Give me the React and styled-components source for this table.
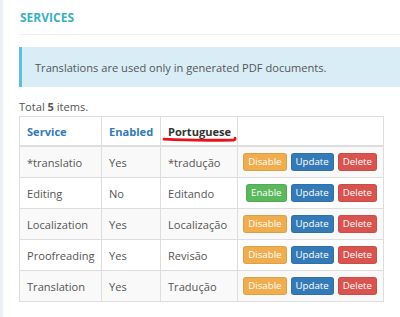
import React from "react";
import styled, { createGlobalStyle } from "styled-components";

const Global = createGlobalStyle`
  html, body { margin: 0; padding: 0; background: #fff; }
  body { font-family: "Open Sans", "Liberation Sans", sans-serif; color: #555; }
`;

const Page = styled.div`
  display: flex;
  width: 400px;
  height: 317px;
  overflow: hidden;
`;

const SideStrip = styled.div`
  width: 3px;
  flex: none;
  background: #edf0f5;
`;

const Content = styled.main`
  flex: 1;
  padding: 9px 0 0 16px;
  min-width: 0;
`;

const Title = styled.h2`
  margin: 0 0 0 1px;
  font-size: 12px;
  line-height: 18px;
  font-weight: 700;
  color: #3aafc1;
`;

const Rule = styled.hr`
  margin: 7px 0 12px 1px;
  border: 0;
  border-top: 1px solid #eeeeee;
`;

const Alert = styled.div`
  height: 40px;
  box-sizing: border-box;
  display: flex;
  align-items: center;
  padding-left: 13px;
  background: #d9edf7;
  border-left: 3px solid #5bc0de;
  font-size: 11.1px;
  color: #555;
`;

const Summary = styled.div`
  margin-top: 12px;
  font-size: 11.1px;
  line-height: 16px;
  color: #555;
  b { font-weight: 700; }
`;

const TableWrap = styled.div`
  position: relative;
  width: 364px;
  margin-top: 1px;
`;

const Table = styled.table`
  width: 364px;
  border-collapse: collapse;
  table-layout: fixed;
  font-size: 11.1px;
`;

const Th = styled.th`
  height: 28px;
  padding: 0 7px;
  text-align: left;
  font-weight: 700;
  color: ${(p) => (p.$link ? "#337ab7" : "#333")};
  border: 1px solid #dddddd;
  border-bottom-width: 2px;
  white-space: nowrap;
  background: #fff;
`;

const Row = styled.tr`
  background: ${(p) => (p.$odd ? "#f9f9f9" : "#fff")};
`;

const Td = styled.td`
  height: 30px;
  padding: 0 ${(p) => (p.$actions ? "6px" : "7px")};
  border: 1px solid #dddddd;
  color: #555;
  white-space: nowrap;
  overflow: ${(p) => (p.$actions ? "visible" : "hidden")};
`;

const Actions = styled.div`
  display: flex;
  justify-content: flex-end;
  gap: 4px;
`;

const colors = {
  warning: "#f0ad4e",
  primary: "#337ab7",
  danger: "#d9534f",
  success: "#5cb85c",
};

const Btn = styled.button`
  flex: none;
  height: 18px;
  padding: 0 4px;
  border: 1px solid rgba(0, 0, 0, 0.08);
  border-radius: 3px;
  background: ${(p) => colors[p.$kind]};
  color: #fff;
  font-family: "Open Sans", "Liberation Sans", sans-serif;
  font-size: 9.7px;
  line-height: 16px;
  white-space: nowrap;
  cursor: pointer;
`;

const Mark = styled.svg`
  position: absolute;
  left: 143px;
  top: 20px;
  pointer-events: none;
`;

const rows = [
  ["*translatio", "Yes", "*tradução", true],
  ["Editing", "No", "Editando", false],
  ["Localization", "Yes", "Localização", true],
  ["Proofreading", "Yes", "Revisão", true],
  ["Translation", "Yes", "Tradução", true],
];

export default function App() {
  return (
    <>
      <Global />
      <Page>
        <SideStrip />
        <Content>
          <Title>SERVICES</Title>
          <Rule />
          <Alert>Translations are used only in generated PDF documents.</Alert>
          <Summary>
            Total <b>5</b> items.
          </Summary>
          <TableWrap>
            <Table>
              <colgroup>
                <col style={{ width: 82 }} />
                <col style={{ width: 59 }} />
                <col style={{ width: 77 }} />
                <col style={{ width: 146 }} />
              </colgroup>
              <thead>
                <tr>
                  <Th $link>Service</Th>
                  <Th $link>Enabled</Th>
                  <Th>Portuguese</Th>
                  <Th />
                </tr>
              </thead>
              <tbody>
                {rows.map(([svc, en, pt, enabled], i) => (
                  <Row key={svc} $odd={i % 2 === 0}>
                    <Td>{svc}</Td>
                    <Td>{en}</Td>
                    <Td>{pt}</Td>
                    <Td $actions>
                      <Actions>
                        {enabled ? (
                          <Btn $kind="warning">Disable</Btn>
                        ) : (
                          <Btn $kind="success">Enable</Btn>
                        )}
                        <Btn $kind="primary">Update</Btn>
                        <Btn $kind="danger">Delete</Btn>
                      </Actions>
                    </Td>
                  </Row>
                ))}
              </tbody>
            </Table>
            <Mark width="76" height="8" viewBox="0 0 76 8">
              <path
                d="M2 3.2 C 25 4.4, 50 4.4, 72 4 C 73 3.8, 73.5 3, 73 2.2"
                fill="none"
                stroke="#e8121b"
                strokeWidth="2.8"
                strokeLinecap="round"
              />
            </Mark>
          </TableWrap>
        </Content>
      </Page>
    </>
  );
}
